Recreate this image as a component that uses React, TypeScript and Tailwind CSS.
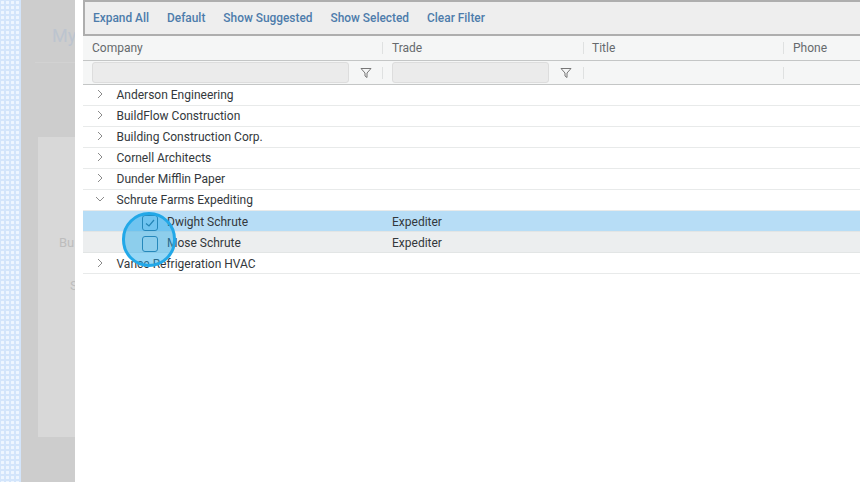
import React from "react";

const Chevron = ({ open }: { open?: boolean }) => (
  <svg width="10" height="10" viewBox="0 0 10 10" fill="none" stroke="#8a8a8a" strokeWidth="1" className="shrink-0 -ml-[0.5px] -mt-[2px]">
    {open ? <path d="M1 3 L5 7 L9 3" /> : <path d="M3 1 L7 5 L3 9" />}
  </svg>
);

const Funnel = () => (
  <svg width="12" height="12" viewBox="0 0 12 12" fill="none" stroke="#777" strokeWidth="1">
    <path d="M1 1.5 H11 L7 6 V10.5 L5 9 V6 Z" />
  </svg>
);

const Check = ({ checked }: { checked?: boolean }) => (
  <div className="w-[16px] h-[16px] rounded-[3px] border-[1.5px] border-[#2f7096] flex items-center justify-center shrink-0">
    {checked && (
      <svg width="12" height="12" viewBox="0 0 12 12" fill="none" stroke="#2a6a8c" strokeWidth="1.2">
        <path d="M2 6.5 L5 9 L10 3" />
      </svg>
    )}
  </div>
);

const Sep = () => <div className="w-px h-[12px] bg-[#dfe1e1] shrink-0" />;

const groupsTop = [
  "Anderson Engineering",
  "BuildFlow Construction",
  "Building Construction Corp.",
  "Cornell Architects",
  "Dunder Mifflin Paper",
];

const GroupRow = ({ name, open, shift }: { name: string; open?: boolean; shift?: boolean }) => (
  <div className={`h-[21px] flex items-center pl-[12px] border-b border-[#e8eaea] text-[12px] text-[#33383c] ${shift ? "pt-[1px]" : ""}`}>
    <Chevron open={open} />
    <span className="ml-[12px]">{name}</span>
  </div>
);

const PersonRow = ({ name, checked, bg }: { name: string; checked?: boolean; bg: string }) => (
  <div className={`h-[21px] flex items-center border-b border-[#e2e5e5] text-[12px] text-[#33383c] ${bg}`}>
    <div className="w-[84px] pl-[59px] pt-[3px] flex justify-start">
      <Check checked={checked} />
    </div>
    <span className="w-[225px] pt-[1px]">{name}</span>
    <span className="pt-[1px]">Expediter</span>
  </div>
);

const Btn = ({ children }: { children: React.ReactNode }) => (
  <span className="text-[11.9px] font-medium text-[#4d7cab] pt-[1px]">{children}</span>
);

export default function App() {
  return (
    <div className="w-[860px] h-[482px] flex overflow-hidden relative bg-white font-['Roboto',sans-serif]">
      <div className="w-[21px] shrink-0 bg-[#d3e5fb] bg-[radial-gradient(circle,#eef6ff_1.4px,transparent_1.7px)] bg-[length:5px_5px]" />
      <div className="w-[54px] shrink-0 bg-[#cdcdcd] flex flex-col overflow-hidden">
        <div className="h-[63px] shrink-0 border-b border-[#d2d2d2] ml-[14px] pl-[17px] pt-[24px] text-[18px] leading-[24px] text-[#bcc4cf] whitespace-nowrap">
          My
        </div>
        <div className="h-[300px] mt-[74px] ml-[17px] bg-[#d8d8d8] text-[13px] leading-[16px] text-[#bdbdbd] pl-[21px] pt-[98px] whitespace-nowrap">
          <div>Bu</div>
          <div className="mt-[27px] pl-[11px]">S</div>
        </div>
      </div>
      <div className="flex-1 pl-[8px] min-w-0">
        <div className="h-[36px] bg-[#eeeeee] border-y-2 border-l-2 border-[#aeaeae] flex items-center gap-[18px] pl-[8px]">
          <Btn>Expand All</Btn>
          <Btn>Default</Btn>
          <Btn>Show Suggested</Btn>
          <Btn>Show Selected</Btn>
          <Btn>Clear Filter</Btn>
        </div>
        <div className="h-[25px] bg-[#f5f6f6] border-b border-[#c4c6c6] flex items-center text-[12px] text-[#666a6d]">
          <div className="w-[299px] pl-[9px]">Company</div>
          <Sep />
          <div className="w-[200px] pl-[9px]">Trade</div>
          <Sep />
          <div className="w-[199px] pl-[8px]">Title</div>
          <Sep />
          <div className="pl-[9px]">Phone</div>
        </div>
        <div className="h-[24px] bg-[#f5f6f6] border-b border-[#c4c6c6] flex items-center">
          <div className="w-[299px] pl-[9px] pr-[33px]">
            <div className="h-[21px] bg-[#ebebeb] border border-[#dddddd] rounded-[3px]" />
          </div>
          <div className="absolute left-[360px] top-[67px]"><Funnel /></div>
          <Sep />
          <div className="w-[200px] pl-[9px] pr-[34px]">
            <div className="h-[21px] bg-[#ebebeb] border border-[#dddddd] rounded-[3px]" />
          </div>
          <div className="absolute left-[560px] top-[67px]"><Funnel /></div>
          <Sep />
          <div className="w-[199px]" />
          <Sep />
        </div>
        {groupsTop.map((g) => (
          <GroupRow key={g} name={g} />
        ))}
        <GroupRow name="Schrute Farms Expediting" open />
        <PersonRow name="Dwight Schrute" checked bg="bg-[#b7ddf6]" />
        <PersonRow name="Mose Schrute" bg="bg-[#eceeef]" />
        <GroupRow name="Vance Refrigeration HVAC" shift />
      </div>
      <div className="absolute left-[122px] top-[212px] w-[54px] h-[55px] rounded-full bg-[#1aa7e8]/45 border-[3px] border-[#22a8e8]" />
    </div>
  );
}
